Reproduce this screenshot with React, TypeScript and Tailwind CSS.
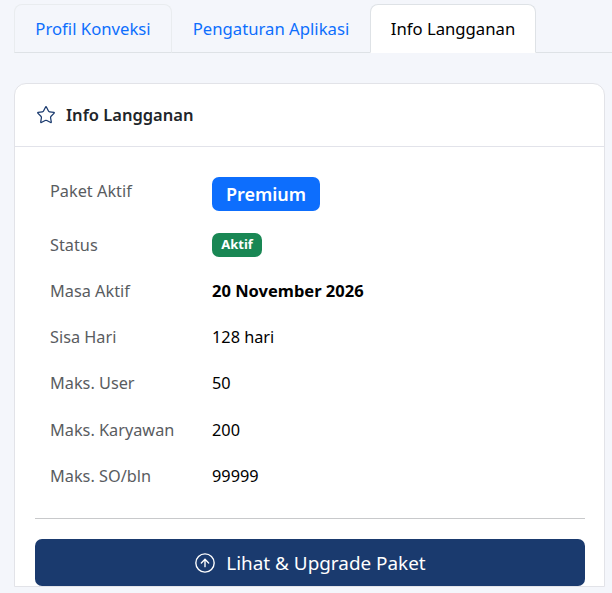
import { ArrowUpCircle, Star } from "lucide-react";

const rows = [
    { label: "Masa Aktif", value: "20 November 2026", bold: true },
    { label: "Sisa Hari", value: "128 hari" },
    { label: "Maks. User", value: "50" },
    { label: "Maks. Karyawan", value: "200" },
    { label: "Maks. SO/bln", value: "99999" },
];

export default function App() {
    return (
        <div className="h-[593px] overflow-hidden bg-[#f4f6fb] pl-[14px] pt-[4px] font-['Noto_Sans',sans-serif] text-[16.3px] text-black">
            <div className="flex h-[49px] border-b border-[#dee2e6] text-[16.7px]">
                <div className="flex h-[49px] w-[158px] items-center justify-center rounded-t-[8px] border border-[#e9ecef] border-b-transparent text-[#0d6efd]">Profil Konveksi</div>
                <div className="flex h-[49px] w-[198px] items-center justify-center text-[#0d6efd]">Pengaturan Aplikasi</div>
                <div className="flex h-[49px] w-[166px] items-center justify-center rounded-t-[8px] border border-[#dee2e6] border-b-white bg-white">Info Langganan</div>
            </div>

            <div className="mt-[30px] w-[591px] rounded-t-[12px] border border-[#e2e3e8] bg-white">
                <div className="flex h-[63px] items-center gap-[10px] border-b border-[#e2e3ea] pl-[21px] text-[16.5px] font-semibold text-[#212529]">
                    <Star size={20} strokeWidth={1.5} className="text-[#1a3a6e]" />
                    <span>Info Langganan</span>
                </div>
                <div className="pl-[20px] pr-[19px] pt-[30px]">
                    <div className="flex h-[34px] px-[15px]">
                        <div className="w-[162px] text-[#595c5f] leading-[28px]">Paket Aktif</div>
                        <span className="flex h-[34px] w-[108px] items-center justify-center rounded-[7px] bg-[#0d6efd] text-[18px] font-semibold text-white">Premium</span>
                    </div>
                    <div className="mt-[22px] flex h-[24px] items-center px-[15px]">
                        <div className="w-[162px] text-[#595c5f]">Status</div>
                        <span className="flex h-[24px] w-[50px] items-center justify-center rounded-[7px] bg-[#198754] text-[13px] font-bold text-white">Aktif</span>
                    </div>
                    <div className="mt-[11px]">
                        {rows.map((row) => (
                            <div key={row.label} className="flex h-[46.25px] items-center px-[15px]">
                                <div className="w-[162px] text-[#595c5f]">{row.label}</div>
                                <div className={row.bold ? "text-[16.5px] font-bold" : ""}>{row.value}</div>
                            </div>
                        ))}
                    </div>
                    <div className="mt-[19px] border-t border-[#c8c9cb]" />
                    <button type="button" className="mt-[20px] flex h-[47px] w-full items-center justify-center gap-[10px] rounded-[7px] bg-[#1a3a6e] text-[18.9px] text-white">
                        <ArrowUpCircle size={22} strokeWidth={1.5} />
                        Lihat &amp; Upgrade Paket
                    </button>
                </div>
            </div>
        </div>
    );
}
